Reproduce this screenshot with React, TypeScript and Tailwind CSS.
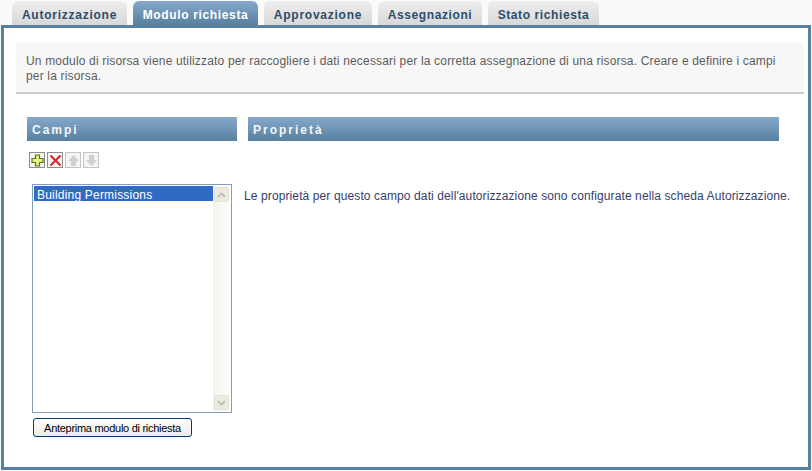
const tabs = [
  { label: "Autorizzazione", width: "w-[115px]", tracking: "tracking-[0.75px]" },
  { label: "Modulo richiesta", width: "w-[125px]", tracking: "tracking-[0.65px]", active: true },
  { label: "Approvazione", width: "w-[108px]", tracking: "tracking-[0.75px]" },
  { label: "Assegnazioni", width: "w-[104px]", tracking: "tracking-[0.6px]" },
  { label: "Stato richiesta", width: "w-[111px]", tracking: "tracking-[0.6px]" },
];

function ToolButton({ children, disabled }: { children: React.ReactNode; disabled?: boolean }) {
  return (
    <div className={`flex h-4 w-4 items-center justify-center border bg-[#f4f4f4] ${disabled ? "border-[#c4c4c4]" : "border-[#8e8e8e]"}`}>
      {children}
    </div>
  );
}

function SectionHeader({ label, className }: { label: string; className: string }) {
  return (
    <div className={`flex h-6 items-center bg-gradient-to-b from-[#86a9cb] to-[#58809f] pl-[5px] pt-px text-[12px] font-bold tracking-[2px] text-[#f2f5f8] ${className}`}>
      {label}
    </div>
  );
}

function ScrollArrow({ down }: { down?: boolean }) {
  return (
    <div className="flex h-[15px] w-[15px] items-center justify-center rounded-[2px] border border-[#e4e2d6] bg-[#ecebe2]">
      <svg width="9" height="6" viewBox="0 0 9 6">
        <path d={down ? "M1 1l3.5 3.5L8 1" : "M1 5l3.5-3.5L8 5"} fill="none" stroke="#c2c2b4" strokeWidth="2" />
      </svg>
    </div>
  );
}

export default function App() {
  return (
    <div className="h-[471px] w-[812px] overflow-hidden bg-[#fafafa] pt-px font-['Liberation_Sans',Arial,sans-serif]">
      <div className="flex h-6 gap-[6px] pl-3">
        {tabs.map((tab) => (
          <div
            key={tab.label}
            className={`flex items-center justify-center rounded-t-[6px] pt-[3px] text-[12px] font-bold ${tab.tracking} ${tab.width} ${
              tab.active ? "bg-gradient-to-b from-[#86a9cb] to-[#58809f] text-white" : "bg-gradient-to-b from-[#eeeeee] to-[#d8d8d8] text-[#2d4d6d]"
            }`}
          >
            {tab.label}
          </div>
        ))}
      </div>

      <div className="ml-px h-[445px] w-[810px] border-[3px] border-[#58809f] bg-white px-3 pt-[15px]">
        <div className="h-[51px] w-[788px] border-b-2 border-[#cccccc] bg-[#f7f7f7] pl-[10px] pr-4 pt-[11px] text-[12px] leading-[15px] tracking-[0.17px] text-[#5d5d5d]">
          Un modulo di risorsa viene utilizzato per raccogliere i dati necessari per la corretta assegnazione di una risorsa. Creare e definire i campi per la risorsa.
        </div>

        <div className="mt-[23px] flex">
          <div className="ml-[11px] w-[210px]">
            <SectionHeader label="Campi" className="w-[210px]" />
            <div className="ml-[2px] mt-[11px] flex gap-[2px]">
              <ToolButton>
                <svg width="13" height="13" viewBox="0 0 13 13">
                  <path d="M4.5 1h4v3.5H12v4H8.500v3.500h-4V8.500H1v-4h3.500z" fill="#e8f08c" stroke="#5c7a00" strokeWidth="1.2" />
                </svg>
              </ToolButton>
              <ToolButton>
                <svg width="13" height="13" viewBox="0 0 13 13">
                  <path d="M1.500 1.500l10 10M11.500 1.500l-10 10" stroke="#dc2a2a" strokeWidth="2.2" />
                </svg>
              </ToolButton>
              <ToolButton disabled>
                <svg width="13" height="13" viewBox="0 0 13 13">
                  <path d="M6.500 1l5.500 6H9v5H4V7H1z" fill="#cfcfcf" />
                </svg>
              </ToolButton>
              <ToolButton disabled>
                <svg width="13" height="13" viewBox="0 0 13 13">
                  <path d="M6.500 12L1 6h3V1h5v5h3z" fill="#cfcfcf" />
                </svg>
              </ToolButton>
            </div>

            <div className="ml-[5px] mt-[16px] flex h-[229px] w-[200px] border border-[#7f9db9] bg-white p-px">
              <div className="flex-1">
                <div className="h-[15px] overflow-hidden bg-[#316ac5] pl-[3px] pt-[2px] text-[12px] leading-[14px] tracking-[0.2px] text-white">Building Permissions</div>
              </div>
              <div className="flex w-[17px] flex-col justify-between bg-gradient-to-r from-[#f3f2ec] to-[#fdfdfa] px-px py-px">
                <ScrollArrow />
                <ScrollArrow down />
              </div>
            </div>

            <button className="ml-[6px] mt-[5px] flex h-[19px] w-[159px] items-center justify-center whitespace-nowrap rounded-[3px] border border-[#003c74] bg-gradient-to-b from-white to-[#ecebe5] pt-px text-[11px] tracking-[-0.28px] text-black">
              Anteprima modulo di richiesta
            </button>
          </div>

          <div className="ml-[11px]">
            <SectionHeader label="Proprietà" className="w-[531px]" />
            <p className="-ml-1 mt-[48px] whitespace-nowrap text-[12px] leading-[15px] tracking-[0.11px] text-[#36406a]">
              Le proprietà per questo campo dati dell'autorizzazione sono configurate nella scheda Autorizzazione.
            </p>
          </div>
        </div>
      </div>
    </div>
  );
}
